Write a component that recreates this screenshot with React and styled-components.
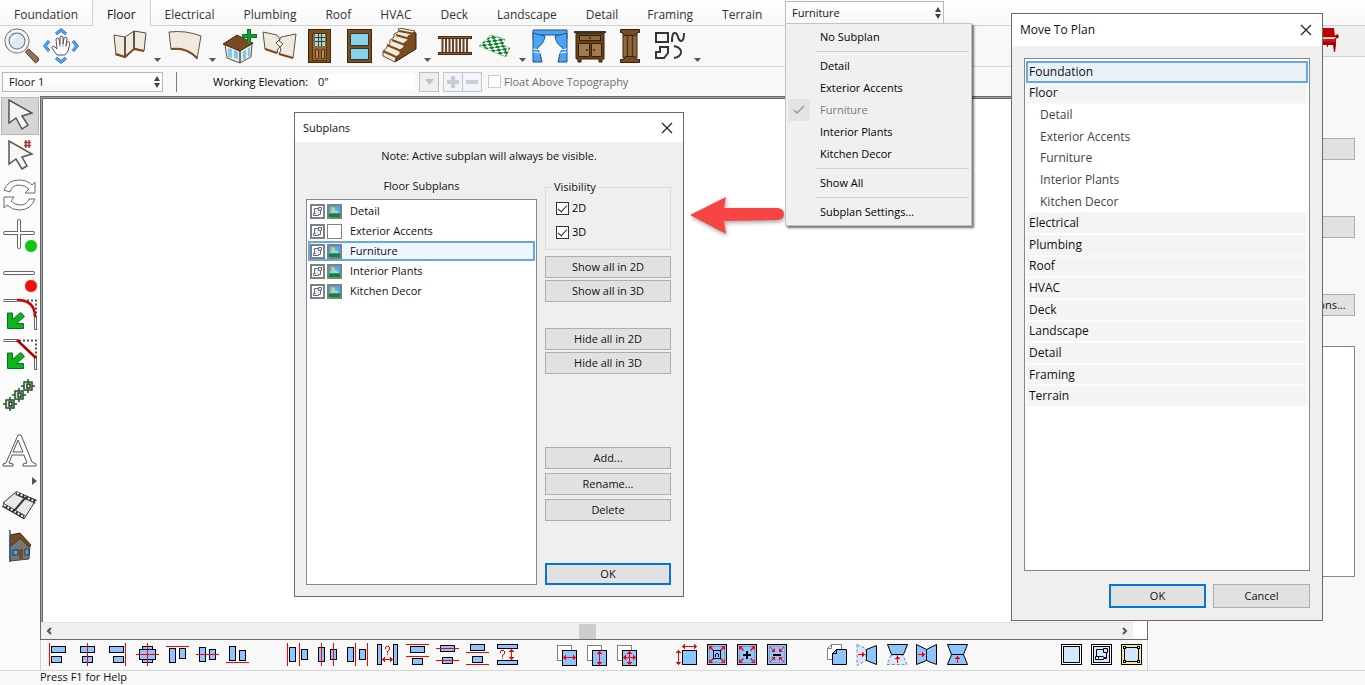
import React, { useState } from 'react';
import styled, { createGlobalStyle } from 'styled-components';

const GlobalStyle = createGlobalStyle`
    * {
        box-sizing: border-box;
    }
    body {
        margin: 0;
        overflow: hidden;
    }
    button, input, select, legend {
        font: inherit;
        color: inherit;
    }
`

const Screen = styled.div`
    position: relative;
    display: flex;
    flex-direction: column;
    height: 100vh;
    overflow: hidden;
    background: #f8f8f8;
    color: #111;
    font-family: "Open Sans", "Noto Sans", sans-serif;
    font-size: 11px;
    line-height: 16px;
`

/* ---------- tabs ---------- */

const TabBar = styled.nav`
    display: flex;
    height: 26px;
    flex: none;
    background: linear-gradient(#ffffff, #f8f8f8);
    border-bottom: 1px solid #d0d0d0;
`
const Tab = styled.button`
    height: 26px;
    padding: 4px 14px 0;
    border: 0;
    border-left: 1px solid ${p => (p.$active ? '#cfcfcf' : 'transparent')};
    border-right: 1px solid ${p => (p.$active ? '#cfcfcf' : 'transparent')};
    margin: 0 0 0 -1px;
    background: ${p => (p.$active ? '#f8f8f8' : 'transparent')};
    color: ${p => (p.$active ? '#111' : '#333')};
    font-size: 12px;
`
const SubplanPicker = styled.div`
    position: relative;
    width: 159px;
    height: 23px;
    margin: 1px 0 0 auto;
`
const TabSpace = styled.div`
    display: flex;
    width: 944px;
`

/* ---------- select with the two small triangles ---------- */

const SelectBox = styled.div`
    position: relative;
    width: ${p => p.$width};
    height: ${p => p.$height};
`
const Select = styled.select`
    width: 100%;
    height: 100%;
    padding: 0 6px;
    appearance: none;
    border: 1px solid #b8b8b8;
    border-radius: 0;
    background: linear-gradient(#ffffff, #f8f8f8);
`
const Spinner = styled.svg`
    position: absolute;
    right: 2px;
    top: 50%;
    margin-top: -7px;
    pointer-events: none;
`

/* ---------- drop menu ---------- */

const Menu = styled.div`
    position: absolute;
    z-index: 5;
    top: 22px;
    left: 0;
    width: 187px;
    padding: 2px;
    border: 1px solid #c3c3c3;
    background: #f0f0f0;
    box-shadow: 2px 2px 2px rgba(0, 0, 0, 0.55);
`
const MenuItem = styled.button`
    display: grid;
    grid-template-columns: 22px 1fr;
    column-gap: 10px;
    align-items: center;
    width: 100%;
    height: 22px;
    padding: 0;
    border: 0;
    background: transparent;
    color: ${p => (p.disabled ? '#7a7a7a' : '#000')};
    text-align: left;
`
const MenuCheck = styled.span`
    display: flex;
    align-items: center;
    justify-content: center;
    height: 22px;
    background: ${p => (p.$on ? '#e4e4e4' : 'transparent')};
`
const MenuRule = styled.hr`
    height: 1px;
    margin: 3px 0 3px 28px;
    border: 0;
    background: #d0d0d0;
`

/* ---------- tool rows ---------- */

const Body = styled.div`
    display: flex;
    flex: 1;
    min-height: 0;
`
const Main = styled.main`
    display: flex;
    flex-direction: column;
    flex: 1;
    min-width: 0;
`
const Toolbar = styled.div`
    display: flex;
    height: 41px;
    flex: none;
    padding-left: 1px;
    border-bottom: 1px solid #d8d8d8;
`
const ToolGroup = styled.div`
    display: flex;
    margin-right: 29px;
`
const ToolButton = styled.button`
    display: flex;
    align-items: center;
    justify-content: center;
    width: 40px;
    height: 40px;
    padding: 0;
    border: 1px solid ${p => (p.$active ? '#b4b4b4' : 'transparent')};
    background: ${p => (p.$active ? '#d6d6d6' : 'transparent')};
`
const MoreButton = styled.button`
    display: flex;
    align-items: flex-end;
    justify-content: center;
    width: 15px;
    height: 36px;
    padding: 0;
    border: 0;
    background: transparent;
`
const OptionBar = styled.div`
    display: flex;
    align-items: center;
    height: 29px;
    flex: none;
    padding: 0 2px;
`
const Divider = styled.div`
    width: 1px;
    height: 20px;
    margin: 0 36px 0 13px;
    background: #7d7d7d;
`
const FieldLabel = styled.label`
    width: 102px;
    color: #000;
`
const ElevationInput = styled.input`
    width: 100px;
    height: 15px;
    padding: 0 3px;
    border: 0;
    background: #fff;
`
const SmallButton = styled.button`
    display: flex;
    align-items: center;
    justify-content: center;
    width: 20px;
    height: 20px;
    margin-left: ${p => (p.$joined ? '-1px' : '4px')};
    padding: 0;
    border: 1px solid ${p => (p.$blue ? '#bfc7cf' : '#bdbdbd')};
    background: ${p => (p.$blue ? '#f1f4f8' : '#efefef')};
`
const CheckLabel = styled.label`
    display: flex;
    align-items: center;
    gap: 3px;
    color: ${p => (p.$dim ? '#6d6d6d' : '#000')};
`
const FloatLabel = styled(CheckLabel)`
    margin-left: 6px;
`
const Tick = styled.input`
    width: 13px;
    height: 13px;
    margin: 0;
    appearance: none;
    border: 1px solid ${p => (p.disabled ? '#cccccc' : '#333333')};
    background: #fff;
    &:checked::after {
        content: "";
        display: block;
        width: 4px;
        height: 8px;
        margin: 0 0 0 3px;
        border: solid #222;
        border-width: 0 1px 1px 0;
        transform: rotate(42deg);
    }
`

/* ---------- drawing area ---------- */

const Workspace = styled.div`
    display: flex;
    flex: 1;
    min-height: 0;
`
const SideTools = styled.div`
    width: 40px;
    flex: none;
    padding-top: 1px;
    background: #fbfbfb;
`
const SideButton = styled(ToolButton)`
    width: 38px;
    height: 38px;
    margin: 0 1px 2px;
`
const TextTools = styled.div`
    padding-top: 16px;
`
const SideMore = styled(MoreButton)`
    align-items: center;
    justify-content: flex-end;
    width: 37px;
    height: 15px;
`
const Stage = styled.div`
    display: flex;
    flex-direction: column;
    flex: 1;
    min-width: 0;
`
const Canvas = styled.div`
    display: flex;
    flex-direction: column;
    flex: 1;
    border: 1px solid #696969;
    background: #fff;
`
const Paper = styled.div`
    flex: 1;
    border: solid #a0a0a0;
    border-width: 1px 0 0 1px;
    box-shadow: inset 1px 1px 0 #696969;
`
const ScrollBar = styled.div`
    display: flex;
    align-items: center;
    justify-content: space-between;
    height: 17px;
    margin-right: 14px;
    padding: 0 5px;
    border-top: 1px solid #dedede;
    background: #f0f0f0;
`
const ScrollButton = styled.button`
    display: flex;
    padding: 0;
    border: 0;
    background: transparent;
`
const Thumb = styled.div`
    width: 17px;
    height: 15px;
    background: #cdcdcd;
`
const AlignBar = styled.div`
    display: flex;
    gap: 30px;
    height: 30px;
    flex: none;
    padding-left: 2px;
    border: solid #d0d0d0;
    border-width: 0 1px;
`
const AlignGroup = styled.div`
    display: flex;
    &:last-child {
        margin-left: auto;
    }
`
const AlignButton = styled.button`
    display: flex;
    align-items: center;
    justify-content: center;
    width: 30px;
    height: 30px;
    padding: 0;
    border: 0;
    background: transparent;
`
const StatusBar = styled.footer`
    height: 15px;
    flex: none;
    padding-left: 40px;
    border-top: 1px solid #d8d8d8;
    line-height: 12px;
`

/* ---------- right hand panel ---------- */

const Aside = styled.aside`
    display: flex;
    flex-direction: column;
    width: 217px;
    flex: none;
`
const AsideTools = styled.div`
    display: flex;
    justify-content: flex-end;
    height: 31px;
    padding: 2px 26px 0 0;
    border-bottom: 1px solid #d0d0d0;
    background: #f0f0f0;
`
const AsideBody = styled.div`
    display: flex;
    flex-direction: column;
    align-items: flex-end;
    padding: 81px 10px 0;
`
const AsideButtons = styled.div`
    display: grid;
    gap: 56px;
    margin-bottom: 30px;
`
const AsideButton = styled.button`
    width: 68px;
    height: 22px;
    padding: 0;
    border: 1px solid #adadad;
    background: #e1e1e1;
`
const AsideList = styled.div`
    width: 100%;
    height: 231px;
    border: 1px solid #828790;
    background: #fff;
`

/* ---------- dialogs ---------- */

const Dialog = styled.section`
    position: absolute;
    left: ${p => p.$left};
    top: ${p => p.$top};
    width: ${p => p.$width};
    border: 1px solid #6a6a6a;
    background: #efefef;
`
const TitleBar = styled.header`
    display: flex;
    align-items: center;
    justify-content: space-between;
    height: ${p => p.$height};
    padding: 0 8px;
    background: #fff;
    font-size: ${p => p.$size || '11px'};
`
const CloseButton = styled.button`
    display: flex;
    padding: 2px;
    border: 0;
    background: transparent;
`
const DialogButton = styled.button`
    height: ${p => p.$height || '22px'};
    padding: 0;
    border: ${p => (p.$primary ? '2px solid #0078d7' : '1px solid #adadad')};
    background: #e1e1e1;
`
const Note = styled.p`
    margin: 6px 0 14px;
    text-align: center;
`
const SubplanGrid = styled.div`
    display: grid;
    grid-template-columns: 231px 126px;
    column-gap: 8px;
    padding: 0 11px 11px;
`
const ListTitle = styled.h2`
    margin: 0 0 5px;
    font-size: 11px;
    font-weight: 400;
    line-height: 16px;
    text-align: center;
`
const ListBox = styled.div`
    height: ${p => p.$height};
    padding: 1px;
    border: 1px solid #828790;
    background: #fff;
`
const SubplanRow = styled.div`
    display: flex;
    align-items: center;
    gap: 2px;
    height: 20px;
    padding-left: ${p => (p.$selected ? '0' : '2px')};
    border: ${p => (p.$selected ? '2px solid #66a7e8' : '0')};
    background: ${p => (p.$selected ? '#eef6ff' : 'transparent')};
`
const RowName = styled.span`
    margin-left: 6px;
`
const Controls = styled.div`
    display: flex;
    flex-direction: column;
    gap: 2px;
    padding-top: 1px;
`
const Group = styled.fieldset`
    display: grid;
    gap: 8px;
    margin: 0 0 4px;
    padding: 5px 10px 9px;
    border: 1px solid #dcdcdc;
`
const Legend = styled.legend`
    margin-left: -4px;
    padding: 0 2px;
    line-height: 16px;
`
const ButtonStack = styled.div`
    display: grid;
    gap: ${p => p.$gap || '2px'};
    margin-bottom: ${p => p.$after};
`
const MoveBody = styled.div`
    padding: 12px;
`
const PlanList = styled.ul`
    display: grid;
    grid-auto-rows: 1fr;
    height: 347px;
    margin: 0;
    padding: 1px 0 0;
    list-style: none;
    font-size: 12px;
`
const PlanRow = styled.li`
    display: flex;
    align-items: center;
    border: ${p => (p.$selected ? '2px solid #66a7e8' : '1px solid #fafafa')};
    padding-left: ${p => (p.$selected ? '1px' : p.$child ? '13px' : '2px')};
    border-color: ${p => (p.$child ? '#fff' : '')};
    background: ${p => (p.$selected ? '#e8f0f8' : p.$child ? '#fff' : '#f4f4f4')};
    color: ${p => (p.$child ? '#444' : '#111')};
`
const MoveButtons = styled.div`
    display: grid;
    grid-template-columns: 97px 97px;
    justify-content: end;
    column-gap: 7px;
    margin-top: 13px;
`
const RedArrow = styled.svg`
    position: absolute;
    left: 688px;
    top: 194px;
    filter: drop-shadow(1px 2px 2px rgba(0, 0, 0, 0.35));
`

/* ---------- big tool drawings, 36 x 36 ---------- */

const wall = '#efeadc';
const wood = '#7a4b1e';

function Pic({ children, size = 36, shift = 0 }) {
    return <svg width={size} height={size} viewBox={`${shift} ${shift} ${size} ${size}`} fill="none" aria-hidden="true">{children}</svg>
}

const toolPics = {
    zoom: <>
        <path d="M22.500 24l3-3 10 9q1 3-3 5z" fill="#927355" stroke="#4a3a2c" />
        <circle cx="14" cy="13" r="10" fill="#ddebf7" stroke="#707070" strokeWidth="5" />
        <circle cx="14" cy="13" r="10" stroke="#f6f6f6" strokeWidth="3" />
        <path d="M9 14q0-6 5-6" stroke="#fff" strokeWidth="1.500" />
    </>,
    pan: <>
        <path d="M13 6l5-4 5 4M13 30l5 4 5-4M6 13l-4 5 4 5M30 13l4 5-4 5" stroke="#246dad" strokeWidth="3" />
        <path d="M13 6l5-4 5 4M13 30l5 4 5-4M6 13l-4 5 4 5M30 13l4 5-4 5" stroke="#4da6f5" strokeWidth="2" />
        <path d="M14 27l-5-7q0-3 3-1l2 2-1-10q1-2 3 0l1 6V9q1-2 3 0v7l1-6q2-2 3 0l-1 8 1-4q2-1 3 1l-2 8-3 4z" fill="#fff" stroke="#555" />
        <path d="M17 16v3M20 16v3M23 17v2" stroke="#999" />
    </>,
    wall: <>
        <path d="M2 7l11 2v20L4 27zM13 9l9-6v18l-9 8zM22 3l12 2-2 18-10-3z" fill={wall} stroke="#4d4d4d" />
        <path d="M4 26l9 3 9-8 10 2" stroke={wood} strokeWidth="2" />
        <path d="M13 9v20M22 3v18" stroke="#4d4d4d" strokeWidth="1.500" />
    </>,
    curve: <>
        <path d="M2 4q17-2 32 4l-4 23Q20 19 4 21z" fill={wall} stroke="#555" />
        <path d="M4 21q16-2 26 9" stroke={wood} strokeWidth="2" />
    </>,
    room: <>
        <path d="M3 17l15 5v13L5 30zM18 22l12-6-1 13-11 6z" fill={wall} stroke="#555" />
        <path d="M1 16l14-9 16 8-13 8z" fill={wood} stroke="#4a2c10" />
        <path d="M6 20l4 1v9l-4-1zM12 22l4 1v8l-4-1zM21 23l3-1v9l-3 1zM26 20l2-1v9l-2 1z" fill="#7ccbe8" />
        <path d="M27 1v15M20 8h15" stroke="#0c7a21" strokeWidth="4" />
        <path d="M27 2v13M21 8h13" stroke="#12a030" strokeWidth="2" />
    </>,
    broken: <>
        <path d="M1 4l14 3 3 4-4 4 4 4-3 3 1 3L3 21zM19 9l15-3-3 24-14-4 2-4-1-3 3-3-4-3z" fill={wall} stroke="#555" />
        <path d="M3 21l12 4M17 26l14 4" stroke={wood} strokeWidth="2" />
    </>,
    door: <>
        <rect x="6.500" y="1.500" width="22" height="33" fill="#7c4f1f" stroke="#432508" />
        <rect x="10.500" y="5.500" width="14" height="27" fill="#94673a" stroke="#5a3410" />
        <path d="M13 6h10v12H13z" fill="#8ee0ef" />
        <path d="M16.500 6v12M19.500 6v12M13 9.500h10M13 13.500h10" stroke="#5a3410" />
        <path d="M13.500 21.500h3v9h-3zM19.500 21.500h3v9h-3z" stroke="#5a3410" fill="#b0895f" />
    </>,
    window: <>
        <rect x="5.500" y="1.500" width="24" height="33" fill="#7c4f1f" stroke="#432508" />
        <path d="M8.500 5.500h18v12h-18zM8.500 20.500h18v11h-18z" fill="#86d3ea" stroke="#333" />
    </>,
    stairs: <>
        <path d="M13 34L34 21V5L26 3z" fill={wood} stroke="#3b2007" />
        <path d="M1 24v4l12 6 1-5 4-3v-4l4-3v-4l4-3v-4l4-2 3-3-16-3-1 4-4 2v3l-4 3v3z" fill={wall} stroke="#6b4a2b" />
        <path d="M1 23l13 6M5 17l14 6M10 12l13 5M14 7l14 4M17 3l16 3" stroke={wood} strokeWidth="2" />
    </>,
    rail: <>
        <path d="M3 8h30v20H3z" fill="#f4f0ea" />
        <path d="M5.500 9v18M9 9v18M12.500 9v18M16 9v18M19.500 9v18M23 9v18M26.500 9v18M30 9v18" stroke="#6a432b" strokeWidth="2" />
        <rect x="1.500" y="8.500" width="33" height="2" fill="#8a5a2b" stroke="#4a2d14" />
        <rect x="1.500" y="24.500" width="33" height="2" fill="#8a5a2b" stroke="#4a2d14" />
    </>,
    tiles: <>
        <defs>
            <pattern id="tilePattern" width="8" height="6" patternUnits="userSpaceOnUse" patternTransform="matrix(0.9 0.3 -0.75 0.65 0 0)">
                <path d="M0 0h8v6H0z" fill="#f6fbf7" />
                <path d="M0 0h4v3H0zM4 3h4v3H4z" fill="#0a7d26" />
            </pattern>
        </defs>
        <path d="M2 18L14 7l14 4-2 6 7 3-4 9z" fill="url(#tilePattern)" stroke="#6d9c79" strokeWidth="0.500" />
    </>,
    curtain: <>
        <path d="M1 2h34v9l-6-4H7l-6 4z" fill="#4ba4f5" stroke="#23517d" />
        <path d="M1 5q7 2 12 3-1 8-8 12l3 5 2 9H1zM35 5q-7 2-12 3 1 8 8 12l-3 5-2 9h9z" fill="#4ba4f5" stroke="#23517d" />
        <path d="M1 21l8 1M1 24l8 1M35 21l-8 1M35 24l-8 1" stroke="#e3f0fb" />
    </>,
    cabinet: <>
        <path d="M4 5h28v26h-2v3h-3v-3H9v3H6v-3H4z" fill="#6d431a" stroke="#35200a" />
        <rect x="2.500" y="3.500" width="31" height="1" fill="#5b5b5b" stroke="#333" />
        <rect x="7.500" y="7.500" width="21" height="5" fill="#8e6940" stroke="#35200a" />
        <path d="M6.500 15.500h11v13h-11zM19.500 15.500h10v13h-10z" fill="#a07b51" stroke="#35200a" />
        <circle cx="18" cy="10" r="1" fill="#35200a" /><circle cx="15" cy="22" r="1" fill="#35200a" /><circle cx="22" cy="22" r="1" fill="#35200a" />
    </>,
    column: <>
        <path d="M11 5h14v25H11z" fill="#8e6940" stroke="#432508" />
        <path d="M15.500 6v24M20.500 6v24" stroke="#553312" strokeWidth="1.500" />
        <path d="M8.500 1.500h19v3h-2l-2 3h-11l-2-3h-2zM8.500 34.500v-3h3l2-3h9l2 3h3v3z" fill={wood} stroke="#35200a" />
    </>,
    shapes: <g stroke="#333" strokeWidth="2">
        <path d="M4 5h12v9H4z" />
        <path d="M20 14q0-10 3-9 2 0 3 4t3 4q3 0 3-8" />
        <path d="M8 19h8v6l-4 5H4v-6h4z" />
        <path d="M22 18q8 2 7 7-1 4-7 5" />
    </g>,
}

const greenArrow = <path d="M6.500 16v15.500h16v-5h-7l8-7-4-4-8 7V16z" fill="#0cb41d" stroke="#08751a" />;

const sidePics = {
    select: <path d="M8 3v23l7-5 6 11 6-4-6-9 10-3z" fill="#f6f6f6" stroke="#555" strokeWidth="1.500" />,
    selectHash: <>
        <path d="M8 4v23l7-5 6 10 5-3-5-9 10-3z" fill="#f6f6f6" stroke="#555" strokeWidth="1.500" />
        <path d="M25 3v8M28 3v8M23 5.500h7M23 8.500h7" stroke="#b33030" strokeWidth="1.500" />
    </>,
    cycle: <g fill="#fff" stroke="#6a6a6a">
        <path d="M3 13Q7 3 18 3q8 0 13 5l3-3v11H24l4-4q-4-4-10-4-7 0-9 7z" />
        <path d="M34 22q-4 11-16 11-7 0-12-5l-3 3V20h10l-3 4q4 4 9 4 7 0 9-6z" />
    </g>,
    add: <>
        <path d="M18 4v26M4 16h28" stroke="#666" strokeWidth="4" strokeLinecap="round" />
        <path d="M18 4v26M4 16h28" stroke="#fff" strokeWidth="2" strokeLinecap="round" />
        <circle cx="30" cy="29" r="6.500" fill="#11c411" stroke="#f8f8f8" />
    </>,
    remove: <>
        <path d="M4 16h28" stroke="#666" strokeWidth="4" strokeLinecap="round" />
        <path d="M4 16h28" stroke="#fff" strokeWidth="2" strokeLinecap="round" />
        <circle cx="30" cy="29" r="6.500" fill="#ef1010" stroke="#f8f8f8" />
    </>,
    fillet: <>
        <path d="M2.500 3.500h14M34.500 20v13" stroke="#666" strokeWidth="3" />
        <path d="M3 3.500h14M34.500 20v12" stroke="#fff" />
        <path d="M18 3.500h17v17" stroke="#555" strokeWidth="2" strokeDasharray="2 2" />
        <path d="M16 3q18 0 18 17" stroke="#d00000" strokeWidth="2.500" />
        {greenArrow}
    </>,
    chamfer: <>
        <path d="M2.500 3.500h14M34.500 20v13" stroke="#666" strokeWidth="3" />
        <path d="M3 3.500h14M34.500 20v12" stroke="#fff" />
        <path d="M18 3.500h17v17" stroke="#555" strokeWidth="2" strokeDasharray="2 2" />
        <path d="M16 3l19 18" stroke="#b00000" strokeWidth="2.500" />
        {greenArrow}
    </>,
    copies: <g stroke="#155723" strokeWidth="1.500">
        {[[9, 27], [18, 18], [27, 9]].map(([x, y]) => (
            <g key={x}>
                <path d={`M${x - 4} ${y - 4}h8v8h-8zM${x} ${y - 7}v3M${x} ${y + 4}v3M${x - 7} ${y}h3M${x + 4} ${y}h3`} fill="#e4efe6" />
                <path d={`M${x - 1} ${y - 2}h3v4h-3z`} stroke="#333" />
            </g>
        ))}
    </g>,
    text: <path d="M2 33v-2l3-1L17 2h3l11 27 4 2v2H22v-2l4-1-3-8H11l-3 8 4 1v2zM12 19h10L17 7z" fill="#fff" stroke="#555" />,
    film: <>
        <path d="M2 15L15 4l20 8-12 19z" fill="#e9e9e9" stroke="#333" />
        <path d="M2 17l21 12M15 5l20 9" stroke="#333" strokeWidth="4" />
        <path d="M3 17l20 12M16 5l19 9" stroke="#fff" strokeWidth="2" strokeDasharray="2 2" />
        <path d="M25 9L13 23" stroke="#333" strokeWidth="2" />
    </>,
    house: <>
        <path d="M9 16l10-9 10 10-1 14-19 2z" fill="#777" stroke="#444" />
        <path d="M9 7l10-2 11 12-2 2-9-9-10 9z" fill={wood} stroke="#4a2c10" />
        <path d="M12 22h5v5h-5zM24 21h4v6h-4z" fill="#4ba4f5" stroke="#333" />
        <path d="M18 21h4v10h-4z" fill={wood} />
        <path d="M9 2v32" stroke="#1b5aa0" strokeWidth="1.500" />
    </>,
}

/* ---------- alignment drawings, 24 x 24 on whole pixels ---------- */

const blue = '#8ec5ff';

function Block({ x, y, w, h, fill = blue, stroke = '#000' }) {
    return <rect x={x + 0.5} y={y + 0.5} width={w - 1} height={h - 1} fill={fill} stroke={stroke} />
}
function HLine({ y, x = 0, w = 23 }) {
    return <rect x={x} y={y} width={w} height="1" fill="#f00" />
}
function VLine({ x, y = 0, h = 23 }) {
    return <rect x={x} y={y} width="1" height={h} fill="#f00" />
}
// double headed arrows, a and b are the two tips
function HArrow({ y, a, b }) {
    return <path fill="#f00" d={`M${a} ${y}h${b - a}v1H${a}zM${a + 1} ${y - 1}h2v3h-2zM${b - 3} ${y - 1}h2v3h-2zM${a + 2} ${y - 2}h1v5h-1zM${b - 3} ${y - 2}h1v5h-1z`} />
}
function VArrow({ x, a, b }) {
    return <path fill="#f00" d={`M${x} ${a}h1v${b - a}h-1zM${x - 1} ${a + 1}h3v2h-3zM${x - 1} ${b - 3}h3v2h-3zM${x - 2} ${a + 2}h5v1h-5zM${x - 2} ${b - 3}h5v1h-5z`} />
}
function Question({ x, y }) {
    return <path fill="#f00" d="M0 1h1v2H0zM1 0h3v1H1zM4 1h1v3H4zM3 4h1v1H3zM2 5h1v2H2zM2 8h1v1H2z" transform={`translate(${x} ${y})`} />
}
function Stack({ children }) {
    return <>
        <Block x={1} y={2} w={15} h={16} fill="#fff" stroke="#808080" />
        <Block x={6} y={7} w={15} h={16} />
        {children}
    </>
}
function Spread({ children, inward }) {
    return <>
        <Block x={1} y={1} w={20} h={21} />
        <path d="M3.500 3.500h15v16h-15z" stroke="#808080" strokeDasharray="1 1" />
        {inward
            ? <>
                <path d="M4 4l4 4M18 4l-4 4M4 19l4-4M18 19l-4-4" stroke="#f00" />
                <path fill="#f00" d="M9 5v4H5zM13 5v4h4zM9 18v-4H5zM13 18v-4h4z" />
            </>
            : <path fill="#f00" d="M3 3h4L3 7zM15 3h4v4zM3 20v-4l4 4zM19 20h-4l4-4zM5 4l3 3-1 1-3-3zM17 4l1 1-3 3-1-1zM5 19l-1-1 3-3 1 1zM17 19l1-1-3-3-1 1z" />}
        {children}
    </>
}
function ArrowRight() {
    return <path fill="#f00" d="M2 11h7v1H2zM6 9h1v5H6zM7 10h1v3H7z" />
}
function ArrowUp() {
    return <path fill="#f00" d="M11 13h1v7h-1zM9 15h5v1H9zM10 14h3v1h-3z" />
}

const alignGroups = [
    [
        ['Align left', <><VLine x={3} /><Block x={5} y={3} w={15} h={7} /><Block x={5} y={13} w={11} h={7} /></>],
        ['Align center', <><Block x={4} y={3} w={15} h={7} /><Block x={6} y={13} w={11} h={7} /><VLine x={11} /></>],
        ['Align right', <><Block x={3} y={3} w={15} h={7} /><Block x={7} y={13} w={11} h={7} /><VLine x={19} /></>],
        ['Center both', <><Block x={6} y={3} w={11} h={17} /><Block x={3} y={6} w={17} h={11} /><VLine x={11} /><HLine y={11} /></>],
        ['Align top', <><HLine y={3} /><Block x={3} y={5} w={7} h={15} /><Block x={13} y={5} w={7} h={11} /></>],
        ['Align middle', <><Block x={3} y={4} w={7} h={15} /><Block x={13} y={6} w={7} h={11} /><HLine y={11} /></>],
        ['Align bottom', <><Block x={3} y={3} w={7} h={15} /><Block x={13} y={7} w={7} h={11} /><HLine y={19} /></>],
    ],
    [
        ['Distribute left', <><VLine x={1} /><Block x={3} y={4} w={7} h={15} /><VLine x={13} /><Block x={15} y={6} w={7} h={11} /></>],
        ['Distribute center', <><Block x={2} y={4} w={7} h={15} /><VLine x={5} /><Block x={14} y={6} w={7} h={11} /><VLine x={17} /></>],
        ['Distribute right', <><Block x={1} y={4} w={7} h={15} /><VLine x={9} /><Block x={13} y={6} w={7} h={11} /><VLine x={21} /></>],
        ['Horizontal spacing', <><Block x={1} y={1} w={5} h={21} /><Block x={17} y={1} w={5} h={21} /><Question x={9} y={3} /><HArrow y={16} a={6} b={17} /></>],
        ['Distribute top', <><HLine y={1} /><Block x={4} y={3} w={15} h={7} /><HLine y={13} /><Block x={6} y={15} w={11} h={7} /></>],
        ['Distribute middle', <><Block x={4} y={2} w={15} h={7} /><HLine y={5} /><Block x={6} y={14} w={11} h={7} /><HLine y={17} /></>],
        ['Distribute bottom', <><Block x={4} y={1} w={15} h={7} /><HLine y={9} /><Block x={6} y={13} w={11} h={7} /><HLine y={21} /></>],
        ['Vertical spacing', <><Block x={1} y={1} w={21} h={5} /><Block x={1} y={17} w={21} h={5} /><Question x={4} y={7} /><VArrow x={15} a={6} b={17} /></>],
    ],
    [
        ['Same width', <Stack><HArrow y={14} a={7} b={20} /></Stack>],
        ['Same height', <Stack><VArrow x={13} a={8} b={22} /></Stack>],
        ['Same size', <Stack><HArrow y={14} a={7} b={20} /><VArrow x={13} a={8} b={22} /></Stack>],
    ],
    [
        ['Resize', <><HArrow y={3} a={6} b={21} /><VArrow x={2} a={7} b={22} /><Block x={6} y={7} w={15} h={15} /></>],
        ['Fit', <Spread><Block x={7} y={7} w={8} h={9} /><path fill="#000" d="M10 10h2v1h-2zM9 11h1v3H9zM12 11h1v3h-1z" /></Spread>],
        ['Enlarge', <Spread><path fill="#000" d="M10 8h2v8h-2zM7 11h8v2H7z" /></Spread>],
        ['Reduce', <Spread inward><path fill="#000" d="M7 11h8v2H7z" /></Spread>],
    ],
    [
        ['Copy', <><path d="M5.500 1.500h10v15h-14v-11zM5.500 1.500v4h-4" fill="#fff" stroke="#808080" /><path d="M10.500 6.500h10v15h-14v-11zM10.500 6.500v4h-4" fill={blue} stroke="#000" /></>],
        ['Reflect right', <><path d="M1 1.500l9 4v12l-9 5z" fill="#d3e8ff" stroke="#888" strokeDasharray="3 2" /><path d="M10.500 6.500l10-4v19l-10-4z" fill={blue} stroke="#000" /><ArrowRight /></>],
        ['Reflect up', <><path d="M5 12l-4 9.500h20L17 12z" fill="#d3e8ff" stroke="#888" strokeDasharray="3 2" /><path d="M1.500 1.500h20l-4 10h-12z" fill={blue} stroke="#000" /><ArrowUp /></>],
        ['Mirror right', <><path d="M.5 1.500l10 5v11l-10 4zM10.500 6.500l10-5v20l-10-4z" fill={blue} stroke="#000" /><ArrowRight /></>],
        ['Mirror up', <><path d="M1.500 1.500h20l-4 10h-12zM5.500 11.500l-4 10h20l-4-10z" fill={blue} stroke="#000" /><ArrowUp /></>],
    ],
    [
        ['Rectangle', <><Block x={1} y={1} w={21} h={21} fill="#fff" /><Block x={3} y={3} w={17} h={17} fill="#d3e8ff" /></>],
        ['Plan footprint', <><Block x={1} y={1} w={21} h={21} fill="#fff" /><Block x={3} y={3} w={17} h={17} fill="#d3e8ff" /><path d="M6.500 13.500v-7h7v-1h4v4h-1v6h-3v1h-8v-3h3v2M8.500 13.500h5M13.500 6.500v3h3M16.500 14.500h-3" stroke="#000" /></>],
        ['Handles', <><Block x={1} y={1} w={21} h={21} fill="#ffe88a" /><Block x={4} y={4} w={15} h={15} fill="#d3e8ff" />
            <Block x={3} y={3} w={3} h={3} fill="#fff" /><Block x={17} y={3} w={3} h={3} fill="#fff" /><Block x={3} y={17} w={3} h={3} fill="#fff" /><Block x={17} y={17} w={3} h={3} fill="#fff" /></>],
    ],
]

/* ---------- small pieces ---------- */

function Updown() {
    return <Spinner width="8" height="14" viewBox="0 0 8 14"><path d="M1 6l3-5 3 5zM1 8l3 5 3-5z" fill="#444" /></Spinner>
}
function DownArrow() {
    return <svg width="7" height="4" viewBox="0 0 7 4"><path d="M0 0h7L3.500 4z" fill="#555" /></svg>
}
function Cross() {
    return <svg width="12" height="12" viewBox="0 0 12 12"><path d="M1 1l10 10M11 1L1 11" stroke="#222" strokeWidth="1.200" /></svg>
}
function PlanIcon() {
    return (
        <svg width="15" height="15" viewBox="0 0 15 15" fill="none">
            <rect x="1" y="1" width="13" height="13" fill="#fff" stroke="#808080" strokeWidth="2" />
            <path d="M4.500 9.500v-5h4v-1h3v3h-1v4h-2v1h-5v-2h2M8.500 4.500v2h2" stroke="#606a75" fill="#e6f0fa" />
        </svg>
    )
}
function SceneIcon({ off }) {
    return (
        <svg width="15" height="15" viewBox="0 0 15 15">
            <rect x={off ? 0.5 : 1} y={off ? 0.5 : 1} width={off ? 14 : 13} height={off ? 14 : 13} fill={off ? '#fff' : '#4aa8f5'} stroke="#808080" strokeWidth={off ? 1 : 2} />
            {!off && <>
                <circle cx="6" cy="5" r="2" fill="#e6d524" />
                <path d="M3 8q3-3 5-2 3 0 4 3H3z" fill="#a5cfe0" />
                <path d="M2 9.500h11V13H2z" fill="#0b8a2a" />
            </>}
        </svg>
    )
}

function Tool({ name }) {
    return <ToolButton aria-label={name}><Pic>{toolPics[name]}</Pic></ToolButton>
}
function SideTool({ name, active }) {
    return <SideButton $active={active} aria-label={name}><Pic shift={1}>{sidePics[name]}</Pic></SideButton>
}
function More() {
    return <MoreButton aria-label="More"><DownArrow /></MoreButton>
}

const tabs = ['Foundation', 'Floor', 'Electrical', 'Plumbing', 'Roof', 'HVAC', 'Deck', 'Landscape', 'Detail', 'Framing', 'Terrain'];
const subplans = ['Detail', 'Exterior Accents', 'Furniture', 'Interior Plants', 'Kitchen Decor'];

function SubplanMenu() {
    return (
        <Menu role="menu">
            <MenuItem><MenuCheck />No Subplan</MenuItem>
            <MenuRule />
            {subplans.map(name => (
                <MenuItem key={name} disabled={name === 'Furniture'}>
                    <MenuCheck $on={name === 'Furniture'}>
                        {name === 'Furniture' && <svg width="12" height="10" viewBox="0 0 12 10"><path d="M1 5l3 3 7-7" fill="none" stroke="#999" strokeWidth="1.500" /></svg>}
                    </MenuCheck>
                    {name}
                </MenuItem>
            ))}
            <MenuRule />
            <MenuItem><MenuCheck />Show All</MenuItem>
            <MenuRule />
            <MenuItem><MenuCheck />Subplan Settings...</MenuItem>
        </Menu>
    )
}

function SubplansDialog() {
    const [show2d, setShow2d] = useState(true);
    const [show3d, setShow3d] = useState(true);

    return (
        <Dialog $left="294px" $top="112px" $width="390px" aria-label="Subplans">
            <TitleBar $height="29px">
                Subplans
                <CloseButton aria-label="Close"><Cross /></CloseButton>
            </TitleBar>
            <Note>Note: Active subplan will always be visible.</Note>
            <SubplanGrid>
                <div>
                    <ListTitle>Floor Subplans</ListTitle>
                    <ListBox $height="386px">
                        {subplans.map(name => (
                            <SubplanRow key={name} $selected={name === 'Furniture'}>
                                <PlanIcon />
                                <SceneIcon off={name === 'Exterior Accents'} />
                                <RowName>{name}</RowName>
                            </SubplanRow>
                        ))}
                    </ListBox>
                </div>
                <Controls>
                    <Group>
                        <Legend>Visibility</Legend>
                        <CheckLabel><Tick type="checkbox" checked={show2d} onChange={() => setShow2d(!show2d)} />2D</CheckLabel>
                        <CheckLabel><Tick type="checkbox" checked={show3d} onChange={() => setShow3d(!show3d)} />3D</CheckLabel>
                    </Group>
                    <ButtonStack $after="24px">
                        <DialogButton>Show all in 2D</DialogButton>
                        <DialogButton>Show all in 3D</DialogButton>
                    </ButtonStack>
                    <ButtonStack $after="auto">
                        <DialogButton>Hide all in 2D</DialogButton>
                        <DialogButton>Hide all in 3D</DialogButton>
                    </ButtonStack>
                    <ButtonStack $gap="4px" $after="40px">
                        <DialogButton>Add...</DialogButton>
                        <DialogButton>Rename...</DialogButton>
                        <DialogButton>Delete</DialogButton>
                    </ButtonStack>
                    <DialogButton $primary>OK</DialogButton>
                </Controls>
            </SubplanGrid>
        </Dialog>
    )
}

function MoveDialog() {
    return (
        <Dialog $left="1011px" $top="13px" $width="312px" aria-label="Move To Plan">
            <TitleBar $height="32px" $size="12px">
                Move To Plan
                <CloseButton aria-label="Close"><Cross /></CloseButton>
            </TitleBar>
            <MoveBody>
                <ListBox $height="513px">
                    <PlanList>
                        {tabs.map(tab => (
                            <React.Fragment key={tab}>
                                <PlanRow $selected={tab === 'Foundation'}>{tab}</PlanRow>
                                {tab === 'Floor' && subplans.map(name => <PlanRow key={name} $child>{name}</PlanRow>)}
                            </React.Fragment>
                        ))}
                    </PlanList>
                </ListBox>
                <MoveButtons>
                    <DialogButton $primary $height="24px">OK</DialogButton>
                    <DialogButton $height="24px">Cancel</DialogButton>
                </MoveButtons>
            </MoveBody>
        </Dialog>
    )
}

export default function App() {

    const [subplan, setSubplan] = useState('Furniture');
    const [elevation, setElevation] = useState('0"');

    return (
        <Screen>
            <GlobalStyle />
            <TabBar>
                <TabSpace>
                    {tabs.map(tab => <Tab key={tab} $active={tab === 'Floor'}>{tab}</Tab>)}
                    <SubplanPicker>
                        <SelectBox $width="100%" $height="23px">
                            <Select aria-label="Subplan" value={subplan} onChange={e => setSubplan(e.target.value)}>
                                {subplans.map(name => <option key={name}>{name}</option>)}
                            </Select>
                            <Updown />
                        </SelectBox>
                        <SubplanMenu />
                    </SubplanPicker>
                </TabSpace>
            </TabBar>

            <Body>
                <Main>
                    <Toolbar>
                        <ToolGroup><Tool name="zoom" /><Tool name="pan" /></ToolGroup>
                        <Tool name="wall" /><More />
                        <Tool name="curve" /><More />
                        <Tool name="room" /><Tool name="broken" /><Tool name="door" /><Tool name="window" />
                        <Tool name="stairs" /><More />
                        <Tool name="rail" /><Tool name="tiles" /><More />
                        <Tool name="curtain" /><Tool name="cabinet" /><Tool name="column" />
                        <Tool name="shapes" /><More />
                    </Toolbar>
                    <OptionBar>
                        <SelectBox $width="161px" $height="20px">
                            <Select aria-label="Floor"><option>Floor 1</option></Select>
                            <Updown />
                        </SelectBox>
                        <Divider />
                        <FieldLabel htmlFor="elevation">Working Elevation:</FieldLabel>
                        <ElevationInput id="elevation" value={elevation} onChange={e => setElevation(e.target.value)} />
                        <SmallButton aria-label="Elevations">
                            <svg width="9" height="6" viewBox="0 0 9 6"><path d="M0 0h9L4.500 6z" fill="#c2c2c2" /></svg>
                        </SmallButton>
                        <SmallButton $blue aria-label="Raise">
                            <svg width="14" height="14" viewBox="0 0 14 14"><path d="M7 1v12M1 7h12" stroke="#c9cdd1" strokeWidth="4" /></svg>
                        </SmallButton>
                        <SmallButton $blue $joined aria-label="Lower">
                            <svg width="14" height="14" viewBox="0 0 14 14"><path d="M1 7h12" stroke="#c9cdd1" strokeWidth="4" /></svg>
                        </SmallButton>
                        <FloatLabel $dim><Tick type="checkbox" disabled />Float Above Topography</FloatLabel>
                    </OptionBar>

                    <Workspace>
                        <SideTools>
                            <SideTool name="select" active />
                            <SideTool name="selectHash" />
                            <SideTool name="cycle" />
                            <SideTool name="add" />
                            <SideTool name="remove" />
                            <SideTool name="fillet" />
                            <SideTool name="chamfer" />
                            <SideTool name="copies" />
                            <TextTools>
                                <SideTool name="text" />
                                <SideMore aria-label="More text tools">
                                    <svg width="5" height="8" viewBox="0 0 5 8"><path d="M0 0l5 4-5 4z" fill="#555" /></svg>
                                </SideMore>
                                <SideTool name="film" />
                                <SideTool name="house" />
                            </TextTools>
                        </SideTools>
                        <Stage>
                            <Canvas>
                                <Paper />
                                <ScrollBar>
                                    <ScrollButton aria-label="Scroll left">
                                        <svg width="6" height="8" viewBox="0 0 6 8"><path d="M5 1L2 4l3 3" fill="none" stroke="#555" strokeWidth="2" /></svg>
                                    </ScrollButton>
                                    <Thumb />
                                    <ScrollButton aria-label="Scroll right">
                                        <svg width="6" height="8" viewBox="0 0 6 8"><path d="M1 1l3 3-3 3" fill="none" stroke="#555" strokeWidth="2" /></svg>
                                    </ScrollButton>
                                </ScrollBar>
                            </Canvas>
                            <AlignBar>
                                {alignGroups.map((group, i) => (
                                    <AlignGroup key={i}>
                                        {group.map(([name, drawing]) => (
                                            <AlignButton key={name} aria-label={name}><Pic size={24}>{drawing}</Pic></AlignButton>
                                        ))}
                                    </AlignGroup>
                                ))}
                            </AlignBar>
                        </Stage>
                    </Workspace>
                </Main>

                <Aside>
                    <AsideTools>
                        <svg width="30" height="26" viewBox="0 0 30 26" aria-hidden="true">
                            <path d="M3 0h22l1 9H3z" fill="#c00000" />
                            <path d="M1 8l3-1v5h22l-1-4 4-2 1 3-3 2v5H2z" fill="#a80000" />
                            <path d="M3 11h24v3H3z" fill="#d01010" />
                            <path d="M4 16h23v1l-1 7h-1l-1-7H7l-1 7H4zM18 17h1v2h-1z" fill="#a80000" />
                            <path d="M3 9.500h24" stroke="#e8b0b0" />
                        </svg>
                    </AsideTools>
                    <AsideBody>
                        <AsideButtons>
                            <AsideButton aria-label="Add item" />
                            <AsideButton aria-label="Edit item" />
                            <AsideButton>Options...</AsideButton>
                        </AsideButtons>
                        <AsideList />
                    </AsideBody>
                </Aside>
            </Body>

            <StatusBar>Press F1 for Help</StatusBar>

            <SubplansDialog />
            <MoveDialog />
            <RedArrow width="98" height="42" viewBox="0 0 98 42" aria-hidden="true">
                <path d="M2 21L38 3l-2 11 54 0q6 1 6 6t-6 6l-54 1 2 13z" fill="#f94444" />
            </RedArrow>
        </Screen>
    )
}
